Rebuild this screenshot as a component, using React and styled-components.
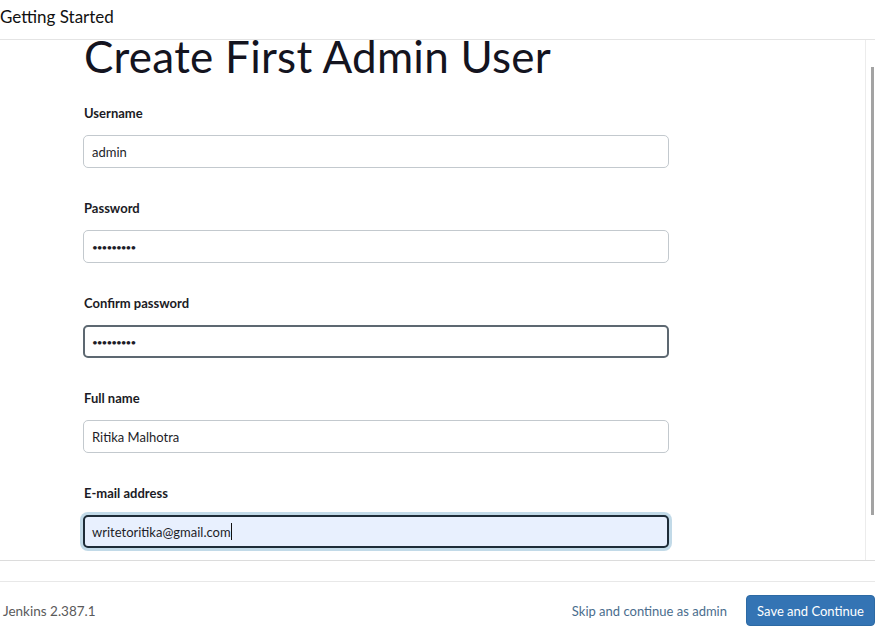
import React from "react";
import styled, { createGlobalStyle, css } from "styled-components";

const Global = createGlobalStyle`
  html, body { margin: 0; padding: 0; background: #fff; }
  body { font-family: Lato, "Noto Sans", "Liberation Sans", sans-serif; color: #14141f; }
  * { box-sizing: border-box; }
`;

const Page = styled.div`
  width: 875px;
  height: 631px;
  display: flex;
  flex-direction: column;
  overflow: hidden;
`;

const Header = styled.header`
  height: 40px;
  flex: none;
  border-bottom: 1px solid #e4e4e4;
  font-size: 17px;
  line-height: 34px;
  padding-left: 0;
  color: #111;
`;

const Body = styled.div`
  position: relative;
  height: 520px;
  flex: none;
  display: flex;
`;

const Content = styled.div`
  width: 866px;
  border-right: 1px solid #ececec;
  padding: 0 0 0 83px;
`;

const Thumb = styled.div`
  position: absolute;
  right: 1px;
  top: 27px;
  width: 3px;
  height: 448px;
  background: #a3a3a3;
`;

const Title = styled.h1`
  margin: 0 0 0 1px;
  font-size: 44px;
  font-weight: 400;
  line-height: 33px;
  color: #14141f;
  letter-spacing: 0.25px;
`;

const Form = styled.div`
  margin-top: 30px;
  display: flex;
  flex-direction: column;
  gap: 30px;
`;

const Field = styled.div`
  display: flex;
  flex-direction: column;
  gap: 12px;
`;

const Label = styled.div`
  font-size: 13px;
  font-weight: 700;
  line-height: 20px;
  padding-left: 1px;
  color: #1b1b25;
`;

const Box = styled.div`
  width: 586px;
  height: 33px;
  border: 1px solid #c3c9ce;
  border-radius: 5px;
  padding: 0 8px;
  display: flex;
  align-items: center;
  font-size: 13px;
  color: #1d1d28;
  background: #fff;
  ${(p) =>
    p.$state === "hover" &&
    css`
      border: 2px solid #5d6871;
      padding: 0 7px;
    `}
  ${(p) =>
    p.$state === "focus" &&
    css`
      border: 2px solid #1e2c38;
      padding: 0 7px;
      background: #e8f0fe;
      box-shadow: 0 0 0 3px #c2dae8;
    `}
`;

const Dots = styled.span`
  font-size: 10px;
  letter-spacing: -1px;
`;

const Caret = styled.span`
  display: inline-block;
  width: 1px;
  height: 17px;
  background: #111;
`;

const Gap = styled.div`
  height: 22px;
  flex: none;
  border-top: 1px solid #dcdcdc;
  border-bottom: 1px solid #e8e8e8;
`;

const Footer = styled.footer`
  flex: 1;
  display: flex;
  align-items: flex-start;
  justify-content: space-between;
  padding: 13px 0 0 3px;
`;

const Version = styled.span`
  font-size: 13.5px;
  line-height: 18px;
  color: #5a5a5a;
  margin-top: 7px;
`;

const Actions = styled.div`
  display: flex;
  align-items: center;
  gap: 19px;
`;

const SkipLink = styled.a`
  font-size: 13px;
  color: #4a6d8d;
  text-decoration: none;
`;

const Primary = styled.button`
  width: 129px;
  height: 31px;
  border: 1px solid #2d6aa4;
  border-radius: 4px;
  background: #3474b4;
  color: #fff;
  font-family: inherit;
  font-size: 13px;
  padding: 0;
`;

const fields = [
  { label: "Username", value: "admin" },
  { label: "Password", value: "•••••••••", dots: true },
  { label: "Confirm password", value: "•••••••••", dots: true, state: "hover" },
  { label: "Full name", value: "Ritika Malhotra" },
  { label: "E-mail address", value: "writetoritika@gmail.com", state: "focus", caret: true },
];

export default function App() {
  return (
    <>
      <Global />
      <Page>
        <Header>Getting Started</Header>
        <Body>
          <Content>
            <Title>Create First Admin User</Title>
            <Form>
              {fields.map((f) => (
                <Field key={f.label}>
                  <Label>{f.label}</Label>
                  <Box $state={f.state}>
                    {f.dots ? <Dots>{f.value}</Dots> : <span>{f.value}</span>}
                    {f.caret && <Caret />}
                  </Box>
                </Field>
              ))}
            </Form>
          </Content>
          <Thumb />
        </Body>
        <Gap />
        <Footer>
          <Version>Jenkins 2.387.1</Version>
          <Actions>
            <SkipLink href="#">Skip and continue as admin</SkipLink>
            <Primary>Save and Continue</Primary>
          </Actions>
        </Footer>
      </Page>
    </>
  );
}
